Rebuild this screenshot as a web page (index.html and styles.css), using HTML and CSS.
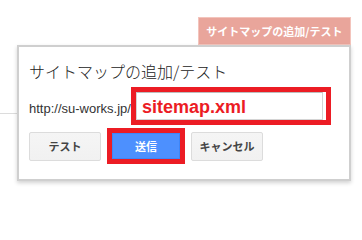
FILE: index.html
```html
<!DOCTYPE html>
<html lang="ja">
<head>
<meta charset="utf-8">
<title>サイトマップの追加/テスト</title>
<link rel="stylesheet" href="styles.css">
</head>
<body>
<div class="page">
  <div class="bg-line"></div>
  <div class="toolbar">
    <button class="add-btn">サイトマップの追加/テスト</button>
  </div>
  <div class="dialog">
    <h2 class="title">サイトマップの追加/テスト</h2>
    <div class="url-row">
      <span class="prefix">http://su-works.jp/</span>
      <div class="hl hl-input">
        <div class="field">sitemap.xml</div>
      </div>
    </div>
    <div class="actions">
      <button class="btn">テスト</button>
      <div class="hl hl-btn">
        <button class="btn primary">送信</button>
      </div>
      <button class="btn">キャンセル</button>
    </div>
  </div>
</div>
</body>
</html>
```

FILE: styles.css
```css
html, body {
  margin: 0;
  padding: 0;
  background: #ffffff;
}

.page {
  position: relative;
  width: 362px;
  height: 203px;
  overflow: hidden;
  font-family: "Noto Sans CJK JP", "Liberation Sans", sans-serif;
}

.bg-line {
  position: absolute;
  left: 0;
  top: 113px;
  width: 17px;
  height: 1px;
  background: #dcdcdc;
}

.toolbar {
  display: flex;
  justify-content: flex-end;
  padding-top: 17px;
  padding-right: 11px;
}

.add-btn {
  box-sizing: border-box;
  width: 153px;
  height: 28px;
  margin: 0;
  padding: 0;
  border: 1px solid #f3c4bc;
  background: #e9a59b;
  color: #ffffff;
  font-family: "Noto Sans CJK JP", sans-serif;
  font-weight: bold;
  font-size: 11px;
  line-height: 1;
  white-space: nowrap;
}

.dialog {
  position: relative;
  box-sizing: border-box;
  width: 334px;
  height: 136px;
  margin-left: 17px;
  border: 2px solid #cfcfcf;
  background: #ffffff;
  box-shadow: 0 2px 4px rgba(0, 0, 0, 0.18);
  padding: 16px 0 15px 10px;
}

.title {
  margin: 0;
  font-family: "Noto Sans CJK JP", sans-serif;
  font-weight: 300;
  font-size: 16px;
  line-height: 16px;
  height: 16px;
  color: #222222;
  white-space: nowrap;
}

.url-row {
  display: flex;
  align-items: center;
  margin-top: 8px;
  height: 38px;
}

.prefix {
  flex: none;
  width: 102px;
  padding-top: 4px;
  font-family: "Liberation Sans", Arial, sans-serif;
  font-size: 13px;
  line-height: 15px;
  color: #333333;
  white-space: nowrap;
  overflow: visible;
}

.hl {
  position: relative;
  box-sizing: border-box;
  border: 5px solid #ec1c24;
  background: #ffffff;
  display: flex;
}

.hl-input {
  width: 200px;
  height: 38px;
}

.field {
  box-sizing: border-box;
  width: 187px;
  height: 28px;
  border: 1px solid #d4d4d4;
  border-top-color: #bdbdbd;
  display: flex;
  align-items: center;
  padding: 3px 0 0 5px;
  font-family: "Liberation Sans", Arial, sans-serif;
  font-weight: bold;
  font-size: 18px;
  color: #ec1c24;
  white-space: nowrap;
}

.actions {
  display: flex;
  align-items: center;
  gap: 6px;
  margin-top: 3px;
  height: 36px;
}

.btn {
  box-sizing: border-box;
  width: 72px;
  height: 29px;
  margin: 0;
  padding: 0;
  border: 1px solid #dcdcdc;
  border-radius: 2px;
  background: linear-gradient(#f5f5f5, #f1f1f1);
  color: #444444;
  font-family: "Noto Sans CJK JP", sans-serif;
  font-weight: bold;
  font-size: 11px;
  line-height: 1;
  white-space: nowrap;
}

.hl-btn {
  width: 78px;
  height: 36px;
}

.btn.primary {
  width: 68px;
  height: 26px;
  border: 1px solid #3d86f8;
  border-radius: 0;
  background: #4d90fe;
  color: #ffffff;
}
```
